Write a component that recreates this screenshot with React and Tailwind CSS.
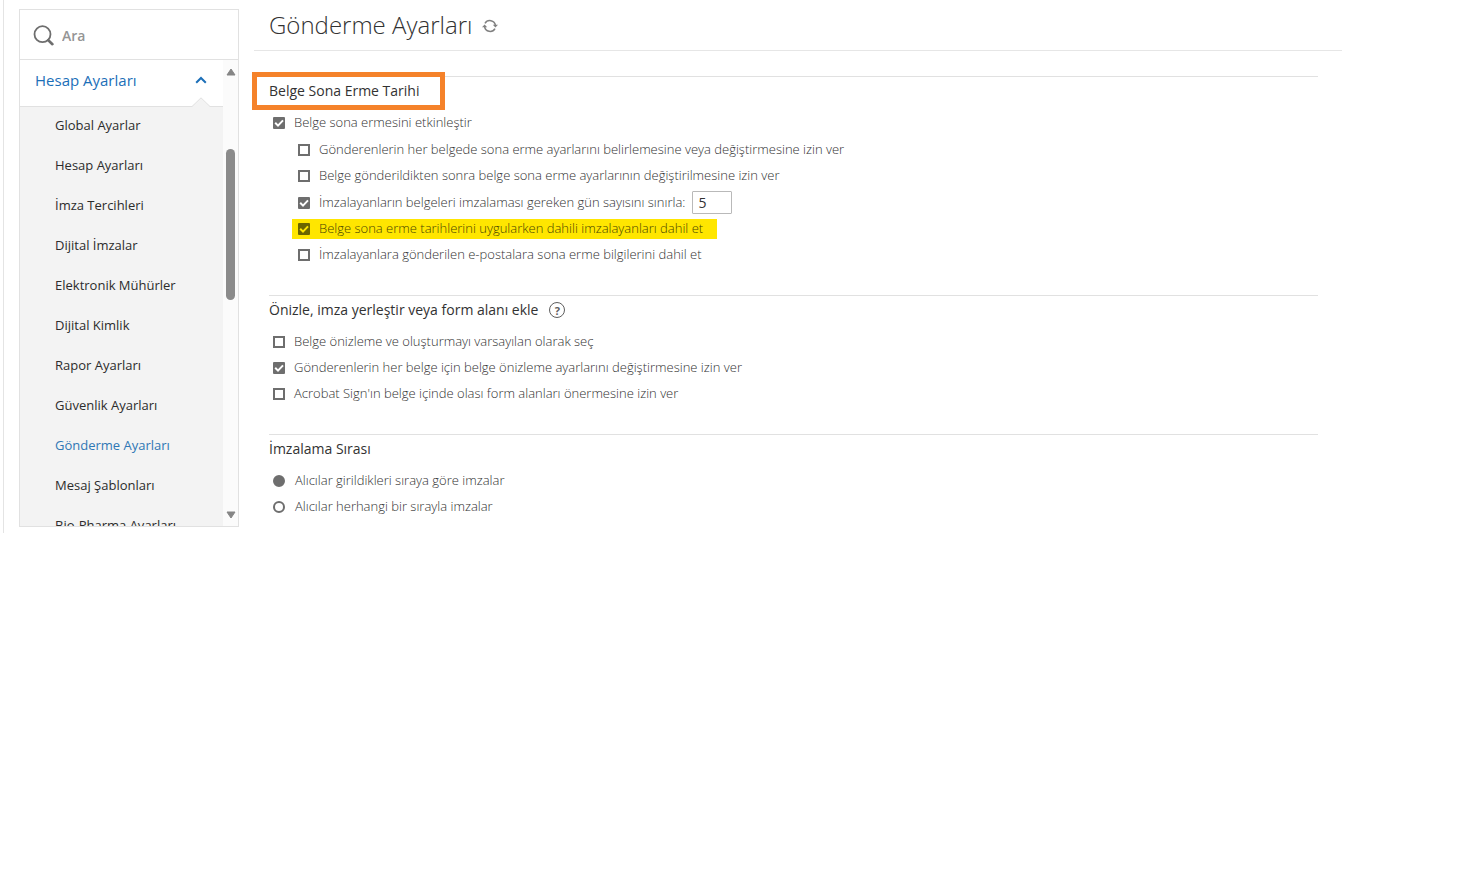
import { useState } from "react";

const MENU_ITEMS = [
  "Global Ayarlar",
  "Hesap Ayarları",
  "İmza Tercihleri",
  "Dijital İmzalar",
  "Elektronik Mühürler",
  "Dijital Kimlik",
  "Rapor Ayarları",
  "Güvenlik Ayarları",
  "Gönderme Ayarları",
  "Mesaj Şablonları",
  "Bio-Pharma Ayarları",
];

function SearchIcon() {
  return (
    <svg width="22" height="22" viewBox="0 0 22 22" fill="none" stroke="#6e6e6e" aria-hidden="true">
      <circle cx="9.5" cy="10.2" r="8" strokeWidth="1.8" />
      <path d="M15.3 16.2 L19.4 20.2" strokeWidth="2.6" strokeLinecap="round" />
    </svg>
  );
}

function RefreshIcon() {
  return (
    <svg width="16" height="14" viewBox="0 0 16 14" fill="none" aria-hidden="true">
      <path d="M3 4.4 A5.6 5.6 0 0 1 13.4 6.4" stroke="#808080" strokeWidth="1.5" />
      <path d="M13 9.6 A5.6 5.6 0 0 1 2.6 7.6" stroke="#808080" strokeWidth="1.5" />
      <path d="M10.8 5.8 H16 L13.4 8.6 Z" fill="#808080" />
      <path d="M5.2 8.2 H0 L2.6 5.4 Z" fill="#808080" />
    </svg>
  );
}

function CheckOption({ label, defaultChecked = false, highlighted = false, children }) {
  const boxColor = highlighted
    ? "border-[#6b6500] checked:bg-[#6b6500]"
    : "border-[#6e6e6e] checked:bg-[#6e6e6e]";

  return (
    <div className={`flex items-center ${children ? "h-[27px]" : "h-[26px]"}`}>
      <label
        className={`flex h-5 items-center ${
          highlighted ? "-ml-1.5 bg-[#ffe600] pr-3.5 pl-1.5 text-[#4a4500]" : ""
        }`}
      >
        <span className="relative mr-[9px] flex">
          <input
            type="checkbox"
            defaultChecked={defaultChecked}
            className={`peer size-3 appearance-none border-2 checked:rounded-[1px] ${boxColor}`}
          />
          <svg
            viewBox="0 0 12 12"
            className={`pointer-events-none absolute inset-0 hidden size-3 peer-checked:block ${
              highlighted ? "stroke-[#ffe600]" : "stroke-white"
            }`}
            fill="none"
            strokeWidth="2"
            aria-hidden="true"
          >
            <path d="M2.2 5.8 L5 8.6 L10 3.4" />
          </svg>
        </span>
        {label}
      </label>
      {children}
    </div>
  );
}

function RadioOption({ label, value, selected, onSelect }) {
  return (
    <label className="flex h-[26px] items-center">
      <input
        type="radio"
        name="signing-order"
        value={value}
        checked={selected}
        onChange={() => onSelect(value)}
        className="mr-2.5 size-3 appearance-none rounded-full border-2 border-[#6e6e6e] checked:bg-[#6e6e6e]"
      />
      {label}
    </label>
  );
}

function Section({ title, boxed = false, help = false, children }) {
  return (
    <section className="mr-6 mb-[27px] ml-[15px] border-t border-[#e1e1e1] last:mb-0">
      <div className="flex h-7 items-center">
        <h2 className="relative text-sm leading-5 text-[#323232]">
          {title}
          {boxed && (
            <span className="pointer-events-none absolute -top-[9px] -right-[26px] -bottom-[9px] -left-[17px] border-[5px] border-[#f5822a]" />
          )}
        </h2>
        {help && (
          <button
            type="button"
            aria-label="Yardım"
            className="ml-[11px] flex size-4 items-center justify-center rounded-full border border-[#5e5e5e] text-[11px] leading-none font-bold text-[#5e5e5e]"
          >
            ?
          </button>
        )}
      </div>
      <div className="mt-[5px] pl-1 text-[13px] font-light text-[#323232]">{children}</div>
    </section>
  );
}

function Sidebar() {
  const [isOpen, setIsOpen] = useState(true);

  return (
    <aside className="mt-[9px] w-[220px] shrink-0 self-start border border-[#e1e1e1]">
      <label className="flex h-[50px] items-center border-b border-[#e1e1e1] pl-[13px]">
        <SearchIcon />
        <input
          type="search"
          placeholder="Ara"
          aria-label="Ara"
          className="ml-[7px] w-36 pt-0.5 text-sm font-semibold outline-none placeholder:text-[#959595]"
        />
      </label>

      <div className="flex h-[466px]">
        <nav className="flex-1 overflow-hidden bg-[#f3f3f3]">
          <button
            type="button"
            aria-expanded={isOpen}
            onClick={() => setIsOpen(!isOpen)}
            className="relative flex h-[47px] w-full items-center justify-between border-b border-[#e1e1e1] bg-white pr-4 pb-1.5 pl-[15px] text-[15px] text-[#1c6fb8]"
          >
            Hesap Ayarları
            <svg width="12" height="8" viewBox="0 0 12 8" fill="none" aria-hidden="true">
              <path d="M1.2 6.8 L6 2 L10.8 6.8" stroke="#1c6fb8" strokeWidth="2" />
            </svg>
            <svg
              width="18"
              height="10"
              viewBox="0 0 18 10"
              className="absolute right-[13px] -bottom-px"
              aria-hidden="true"
            >
              <path d="M0 9.5 L9 0.8 L18 9.5 V10 H0 Z" fill="#f3f3f3" />
              <path d="M0 9.5 L9 0.8 L18 9.5" fill="none" stroke="#e1e1e1" />
            </svg>
          </button>
          {isOpen && (
            <ul>
              {MENU_ITEMS.map((item) => (
                <li key={item}>
                  <a
                    href="#"
                    className={`flex h-10 items-center pb-0.5 pl-[35px] text-[13px] ${
                      item === "Gönderme Ayarları" ? "text-[#2f77b5]" : "text-[#2c2c2c]"
                    }`}
                  >
                    {item}
                  </a>
                </li>
              ))}
            </ul>
          )}
        </nav>
        <div className="flex w-[15px] flex-col items-center bg-[#fbfbfb] pt-2 pb-[7px]" aria-hidden="true">
          <svg width="10" height="8" viewBox="0 0 10 8">
            <path d="M5 1 L9 7 H1 Z" fill="#858585" stroke="#858585" strokeLinejoin="round" />
          </svg>
          <div className="mt-[73px] h-[151px] w-[9px] rounded-full bg-[#8b8b8b]" />
          <svg width="10" height="8" viewBox="0 0 10 8" className="mt-auto">
            <path d="M5 7 L9 1 H1 Z" fill="#858585" stroke="#858585" strokeLinejoin="round" />
          </svg>
        </div>
      </div>
    </aside>
  );
}

export default function App() {
  const [order, setOrder] = useState("sequential");

  return (
    <div className="min-h-screen bg-white font-['Open_Sans','Noto_Sans',sans-serif]">
      <div className="ml-[3px] flex border-l border-[#e4e4e4] pb-[6px] pl-[15px]">
        <Sidebar />

        <main className="mr-[133px] ml-[15px] flex-1">
          <header className="mb-[25px] flex h-[51px] items-center border-b border-[#e6e6e6] pl-[15px]">
            <h1 className="text-2xl font-light text-[#323232]">Gönderme Ayarları</h1>
            <button type="button" aria-label="Yenile" className="ml-2.5 pt-0.5">
              <RefreshIcon />
            </button>
          </header>

          <Section title="Belge Sona Erme Tarihi" boxed>
            <CheckOption label="Belge sona ermesini etkinleştir" defaultChecked />
            <div className="mt-px pl-[25px]">
              <CheckOption label="Gönderenlerin her belgede sona erme ayarlarını belirlemesine veya değiştirmesine izin ver" />
              <CheckOption label="Belge gönderildikten sonra belge sona erme ayarlarının değiştirilmesine izin ver" />
              <CheckOption
                label="İmzalayanların belgeleri imzalaması gereken gün sayısını sınırla:"
                defaultChecked
              >
                <input
                  type="text"
                  defaultValue="5"
                  aria-label="Gün sayısı"
                  className="ml-[7px] h-[23px] w-10 rounded-[1px] border border-[#b9b9b9] px-[5px] text-sm font-normal text-[#323232]"
                />
              </CheckOption>
              <CheckOption
                label="Belge sona erme tarihlerini uygularken dahili imzalayanları dahil et"
                defaultChecked
                highlighted
              />
              <CheckOption label="İmzalayanlara gönderilen e-postalara sona erme bilgilerini dahil et" />
            </div>
          </Section>

          <Section title="Önizle, imza yerleştir veya form alanı ekle" help>
            <CheckOption label="Belge önizleme ve oluşturmayı varsayılan olarak seç" />
            <CheckOption
              label="Gönderenlerin her belge için belge önizleme ayarlarını değiştirmesine izin ver"
              defaultChecked
            />
            <CheckOption label="Acrobat Sign'ın belge içinde olası form alanları önermesine izin ver" />
          </Section>

          <Section title="İmzalama Sırası">
            <RadioOption
              label="Alıcılar girildikleri sıraya göre imzalar"
              value="sequential"
              selected={order === "sequential"}
              onSelect={setOrder}
            />
            <RadioOption
              label="Alıcılar herhangi bir sırayla imzalar"
              value="parallel"
              selected={order === "parallel"}
              onSelect={setOrder}
            />
          </Section>
        </main>
      </div>
    </div>
  );
}
